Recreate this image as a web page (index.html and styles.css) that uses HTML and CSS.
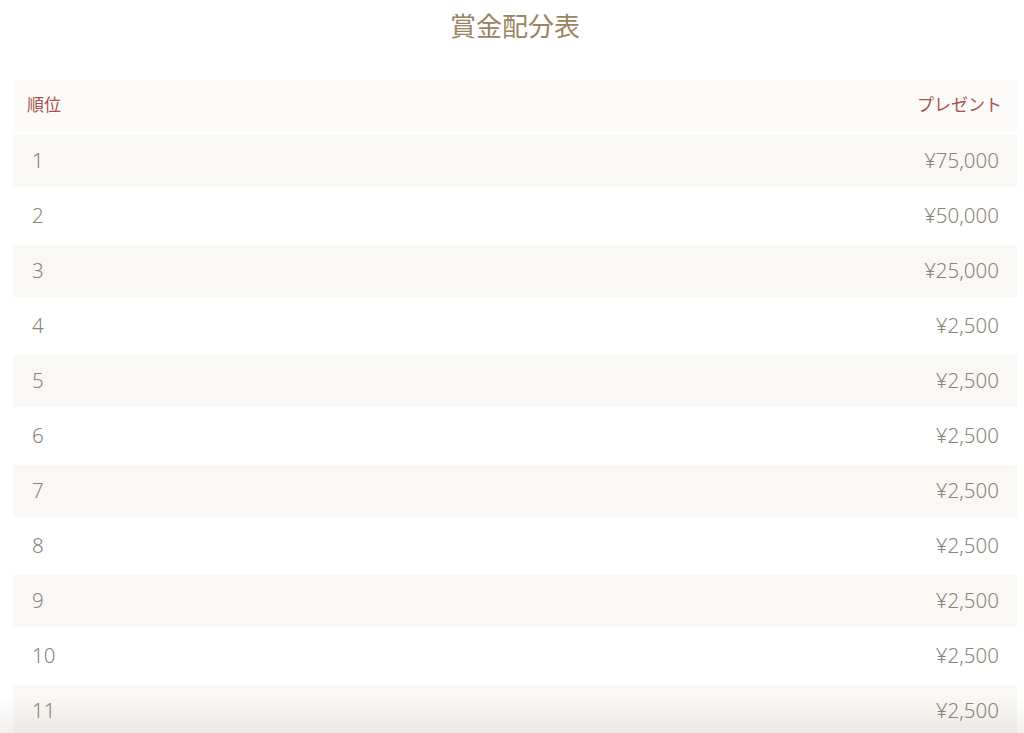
FILE: index.html
```html
<!DOCTYPE html>
<html lang="ja">
<head>
<meta charset="utf-8">
<title>賞金配分表</title>
<link rel="stylesheet" href="styles.css">
</head>
<body>
<main class="page">
  <h2 class="title">賞金配分表</h2>
  <table class="prize-table">
    <thead>
      <tr><th class="rank">順位</th><th class="amount">プレゼント</th></tr>
    </thead>
    <tbody>
      <tr><td class="rank">1</td><td class="amount">¥75,000</td></tr>
      <tr><td class="rank">2</td><td class="amount">¥50,000</td></tr>
      <tr><td class="rank">3</td><td class="amount">¥25,000</td></tr>
      <tr><td class="rank">4</td><td class="amount">¥2,500</td></tr>
      <tr><td class="rank">5</td><td class="amount">¥2,500</td></tr>
      <tr><td class="rank">6</td><td class="amount">¥2,500</td></tr>
      <tr><td class="rank">7</td><td class="amount">¥2,500</td></tr>
      <tr><td class="rank">8</td><td class="amount">¥2,500</td></tr>
      <tr><td class="rank">9</td><td class="amount">¥2,500</td></tr>
      <tr><td class="rank">10</td><td class="amount">¥2,500</td></tr>
      <tr><td class="rank">11</td><td class="amount">¥2,500</td></tr>
    </tbody>
  </table>
</main>
<div class="bottom-shade"></div>
</body>
</html>
```

FILE: styles.css
```css
html, body {
  margin: 0;
  padding: 0;
  height: 100%;
  overflow: hidden;
  background: #ffffff;
}

body {
  font-family: "Noto Sans CJK JP", "Noto Sans", sans-serif;
}

.page {
  padding: 0 7px 0 13px;
}

.title {
  margin: 0 0 27px 0;
  height: 50px;
  line-height: 50px;
  text-align: center;
  font-size: 26px;
  font-weight: 400;
  color: #9b8461;
}

.prize-table {
  width: 100%;
  border-collapse: separate;
  border-spacing: 0 3px;
}

.prize-table th,
.prize-table td {
  padding: 0;
  line-height: 20px;
  vertical-align: middle;
}

.prize-table th {
  height: 48px;
  padding-bottom: 4px;
  font-size: 17px;
  font-weight: 400;
  color: #a4524b;
  background: #fcfbfa;
}

.prize-table th.rank { text-align: left; padding-left: 14px; }
.prize-table th.amount { text-align: right; padding-right: 15px; }

.prize-table td {
  height: 49px;
  padding-bottom: 3px;
  font-family: "Noto Sans", "Noto Sans CJK JP", sans-serif;
  font-size: 20.5px;
  font-weight: 300;
  color: #8a8578;
}

.prize-table td.rank { text-align: left; padding-left: 19px; }
.prize-table td.amount { text-align: right; padding-right: 18px; }

.prize-table tbody tr:nth-child(odd) td {
  background: #faf8f5;
}

.bottom-shade {
  position: fixed;
  left: 0;
  right: 0;
  bottom: 0;
  height: 36px;
  background: linear-gradient(to bottom, rgba(120, 110, 95, 0), rgba(120, 110, 95, 0.1));
  pointer-events: none;
}
```
